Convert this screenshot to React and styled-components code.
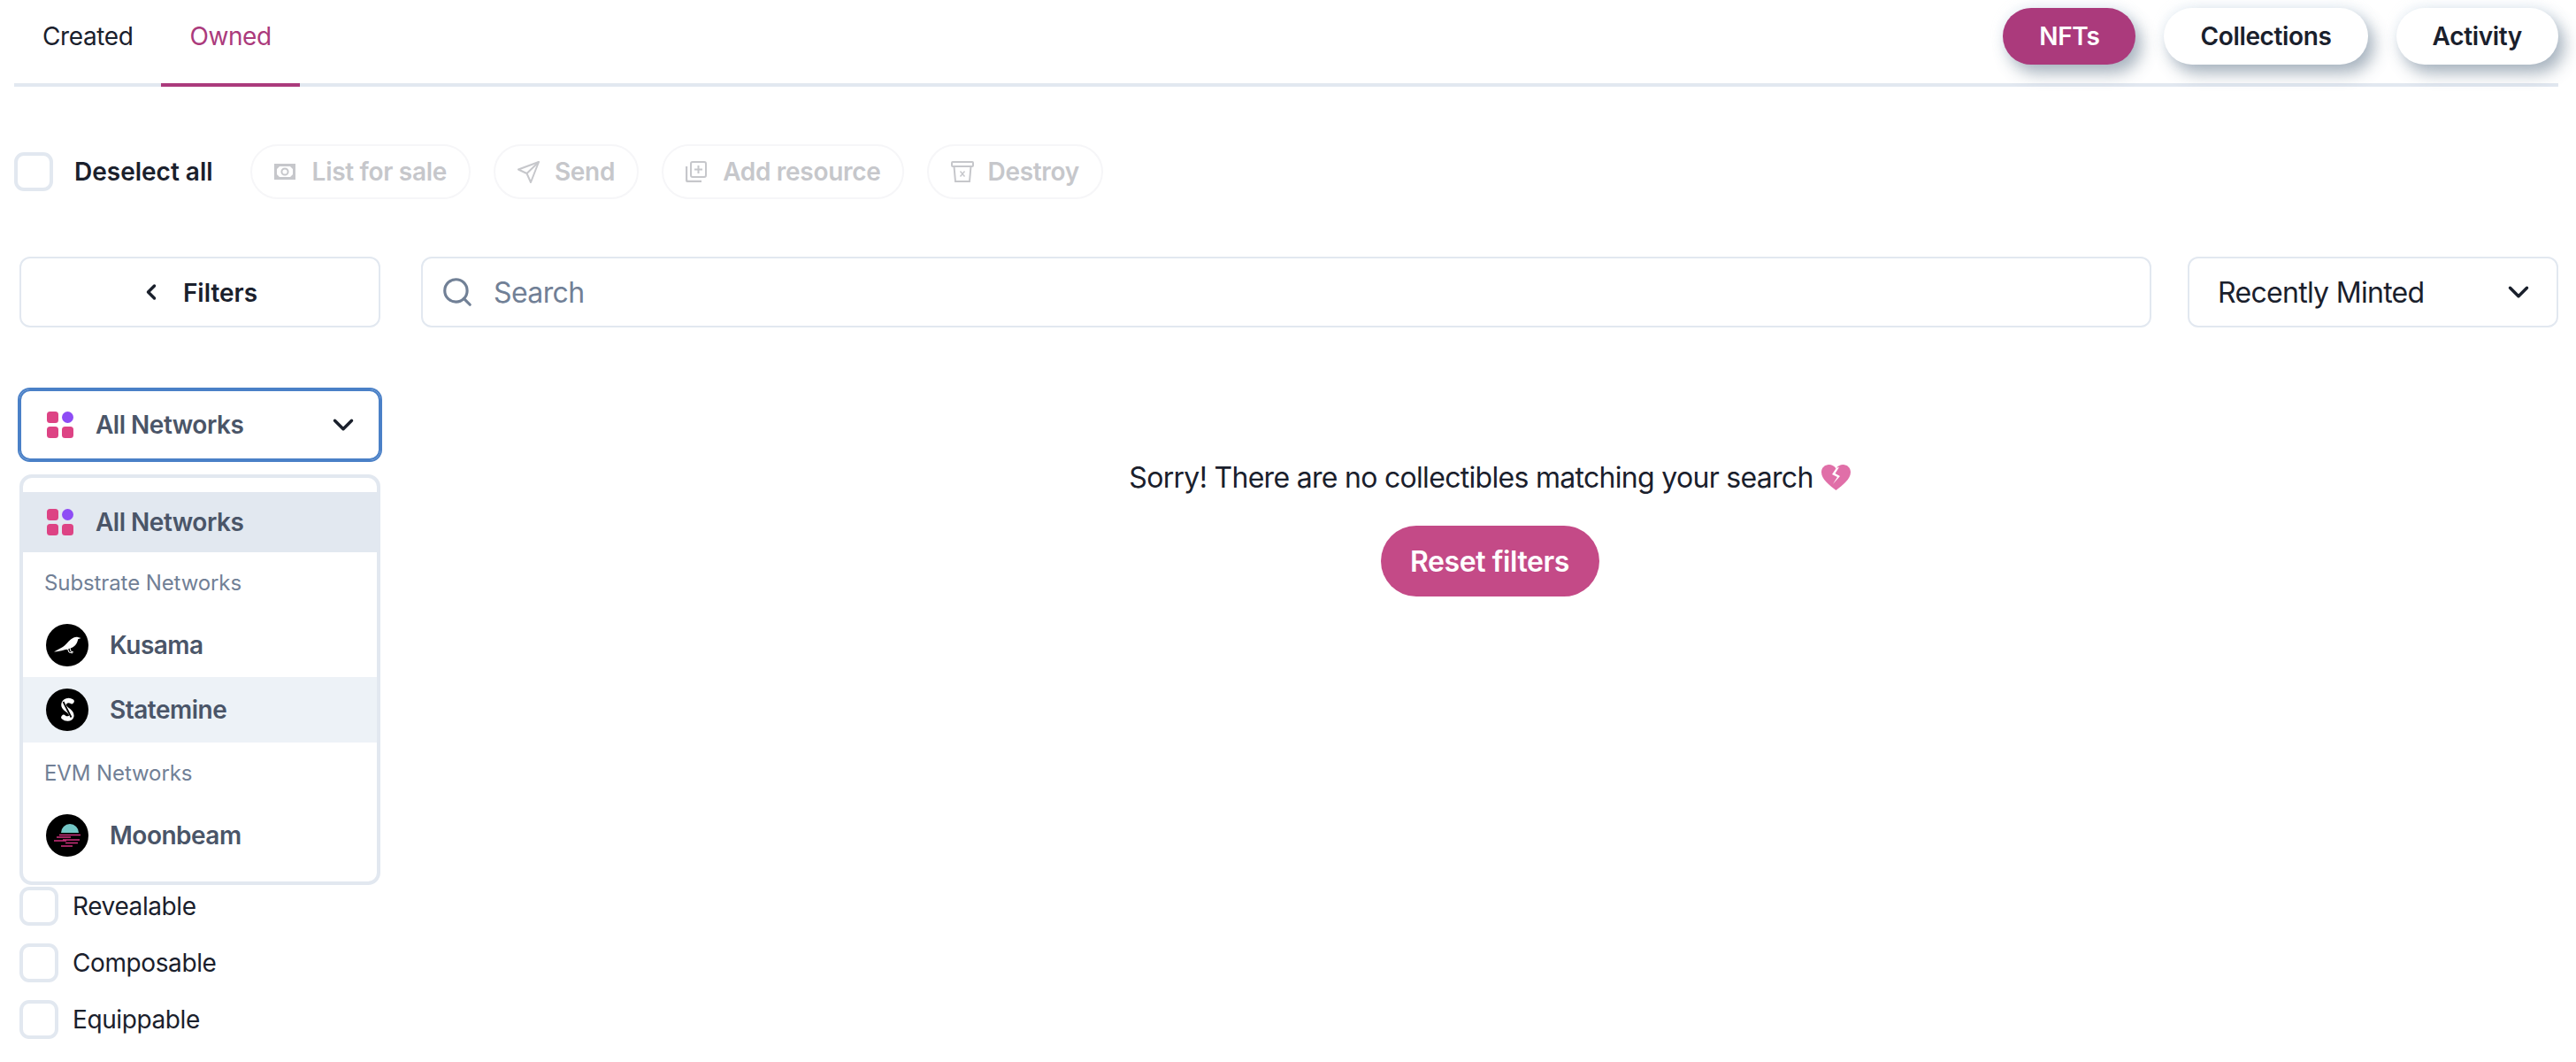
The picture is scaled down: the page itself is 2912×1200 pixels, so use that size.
import React from 'react';
import styled, { createGlobalStyle } from 'styled-components';
import { ChevronDown, ChevronLeft, Search } from 'lucide-react';

const GlobalStyle = createGlobalStyle`
  html, body {
    margin: 0;
    background: #fff;
    color: #1a202c;
    font-family: Inter, "Liberation Sans", sans-serif;
  }
  * { box-sizing: border-box; }
`;

const Page = styled.div`
  width: 2912px;
  height: 1200px;
  padding: 0 20px 0 16px;
  overflow: hidden;
`;

/* Top tabs */
const Header = styled.header`
  display: flex;
  justify-content: space-between;
  height: 98px;
  border-bottom: 4px solid #e2e8f0;
`;

const Tabs = styled.nav`
  display: flex;
`;

const Tab = styled.a`
  height: 98px;
  padding: 20px 32px 0;
  font-size: 28px;
  line-height: 42px;
  letter-spacing: -0.4px;
  color: ${p => (p.$active ? '#ab3a7c' : '#1a202c')};
  border-bottom: 4px solid ${p => (p.$active ? '#ab3a7c' : 'transparent')};
`;

const Pills = styled.div`
  display: flex;
  gap: 32px;
  padding-top: 9px;
`;

const Pill = styled.button`
  height: 64px;
  padding: 0 41px;
  border: 0;
  border-radius: 32px;
  font: 600 28px Inter, sans-serif;
  letter-spacing: -0.35px;
  color: ${p => (p.$active ? '#fff' : '#1a202c')};
  background: ${p => (p.$active ? '#ab3a7c' : '#fff')};
  box-shadow: 7px 10px 18px rgba(66, 90, 115, 0.45), 0 -3px 14px rgba(190, 215, 235, 0.25);
`;

/* Bulk actions */
const Actions = styled.div`
  display: flex;
  align-items: center;
  margin-top: 65px;
  height: 62px;
`;

const Box = styled.span`
  display: block;
  flex: none;
  width: 44px;
  height: 44px;
  border: 4px solid #e2e8f0;
  border-radius: 11px;
  background: #fff;
`;

const DeselectLabel = styled.span`
  margin: 0 42px 0 24px;
  font-size: 28px;
  font-weight: 600;
  color: #1a202c;
`;

const ActionGroup = styled.div`
  display: flex;
  gap: 26px;
`;

const ActionButton = styled.button`
  display: flex;
  align-items: center;
  gap: ${p => p.$gap}px;
  height: 62px;
  padding: 0 25px;
  border: 2px solid #f6f6f8;
  border-radius: 31px;
  background: #fff;
  font: 600 28px Inter, sans-serif;
  letter-spacing: -0.3px;
  color: #c6c7cb;
  svg { flex: none; display: block; }
`;

/* Filters, search, sort */
const Toolbar = styled.div`
  display: flex;
  margin: 65px 0 0 6px;
  height: 80px;
`;

const outlined = `
  height: 80px;
  border: 2px solid #e2e8f0;
  border-radius: 12px;
  background: #fff;
`;

const FilterButton = styled.button`
  ${outlined}
  flex: none;
  width: 408px;
  display: flex;
  align-items: center;
  justify-content: center;
  gap: 22px;
  padding-top: 2px;
  font: 600 28px Inter, sans-serif;
  color: #1a202c;
  svg { margin-left: -4px; margin-top: -2px; }
`;

const SearchBox = styled.div`
  ${outlined}
  flex: none;
  width: 1956px;
  margin-left: 46px;
  display: flex;
  align-items: center;
  gap: 22px;
  padding-left: 20px;
  font-size: 32px;
  letter-spacing: -0.6px;
  color: #718096;
`;

const SortSelect = styled.div`
  ${outlined}
  flex: none;
  width: 419px;
  margin-left: 41px;
  display: flex;
  align-items: center;
  justify-content: space-between;
  padding: 0 24px 0 32px;
  font-size: 32px;
  letter-spacing: -0.7px;
  color: #1a202c;
`;

/* Sidebar and results */
const Main = styled.div`
  display: flex;
  margin: 70px 0 0 6px;
`;

const Sidebar = styled.aside`
  flex: none;
  width: 408px;
`;

const NetworkField = styled.div`
  position: relative;
`;

const NetworkSelect = styled.div`
  height: 80px;
  border-radius: 12px;
  background: #fff;
  box-shadow: 0 0 0 2px #4a80c7, inset 0 0 0 2px #4a80c7;
  display: flex;
  align-items: center;
  justify-content: space-between;
  padding: 0 23px 0 31px;
`;

const NetworkName = styled.span`
  display: flex;
  align-items: center;
  gap: 25px;
  font-size: 28px;
  font-weight: 600;
  letter-spacing: -0.5px;
  color: #4a5568;
`;

const Menu = styled.div`
  position: absolute;
  top: 96px;
  left: 0;
  right: 0;
  padding: 16px 0;
  border: 4px solid #e2e8f0;
  border-radius: 14px;
  background: #fff;
`;

const AllItem = styled.div`
  display: flex;
  align-items: center;
  gap: 25px;
  height: 68px;
  padding-left: 27px;
  background: #e2e8f0;
  font-size: 28px;
  font-weight: 600;
  letter-spacing: -0.5px;
  color: #4a5568;
`;

const GroupTitle = styled.div`
  height: 68px;
  padding-left: 24px;
  font-size: 24px;
  line-height: 70px;
  letter-spacing: -0.1px;
  color: #718096;
`;

const MenuItem = styled.div`
  display: flex;
  align-items: center;
  gap: 24px;
  height: ${p => (p.$hover ? 74 : 73)}px;
  padding-left: 26px;
  background: ${p => (p.$hover ? '#edf2f7' : 'transparent')};
  font-size: 28px;
  font-weight: 600;
  letter-spacing: -0.5px;
  color: #4a5568;
`;

const TraitList = styled.div`
  margin-top: 482px;
  display: flex;
  flex-direction: column;
  gap: 20px;
`;

const Trait = styled.label`
  display: flex;
  align-items: center;
  gap: 16px;
  font-size: 28px;
  letter-spacing: -0.4px;
  color: #1a202c;
`;

const Results = styled.section`
  flex: 1;
  display: flex;
  flex-direction: column;
  align-items: center;
  margin-left: 46px;
  padding-top: 75px;
`;

const EmptyMessage = styled.p`
  display: flex;
  align-items: center;
  gap: 9px;
  margin: 0;
  height: 48px;
  font-size: 32px;
  letter-spacing: -0.7px;
  color: #1a202c;
`;

const ResetButton = styled.button`
  margin-top: 31px;
  width: 247px;
  height: 80px;
  border: 0;
  border-radius: 40px;
  background: #c44a87;
  color: #fff;
  font: 600 32px Inter, sans-serif;
  letter-spacing: -0.4px;
`;

/* Drawn icons */
const CashIcon = () => (
  <svg width="24" height="18" viewBox="0 0 24 18">
    <rect x="1.5" y="1.5" width="21" height="15" fill="#fff" stroke="#c6c7cb" strokeWidth="3" />
    <path d="M2 2h5L2 7zM22 2h-5l5 5zM2 16h5l-5-5zM22 16h-5l5-5z" fill="#c6c7cb" />
    <circle cx="12" cy="9" r="3.6" fill="none" stroke="#c6c7cb" strokeWidth="2" />
  </svg>
);

const SendIcon = () => (
  <svg width="25" height="25" viewBox="0 0 25 25" fill="none" stroke="#c6c7cb" strokeWidth="2" strokeLinejoin="round">
    <path d="M24 1 1 9.5l9.5 4.5L15 24z" />
    <path d="M24 1 10.5 14" />
  </svg>
);

const AddIcon = () => (
  <svg width="24" height="24" viewBox="0 0 24 24" fill="none" stroke="#c6c7cb" strokeWidth="2">
    <rect x="6" y="1" width="17" height="17" rx="2" />
    <path d="M1 6v15a2 2 0 0 0 2 2h15" strokeWidth="2.4" />
    <path d="M14.5 5v9M10 9.5h9" />
  </svg>
);

const BinIcon = () => (
  <svg width="26" height="24" viewBox="0 0 26 24" fill="none" stroke="#c6c7cb" strokeWidth="2">
    <rect x="1" y="1" width="24" height="5" rx="1" />
    <path d="M3.5 6 5 23h16l1.5-17" />
    <path d="m10.5 11.5 5 6M15.5 11.5l-5 6" strokeWidth="1.4" />
  </svg>
);

const AllNetworksIcon = () => (
  <svg width="30" height="30" viewBox="0 0 30 30">
    <rect width="13" height="13" rx="3.5" fill="#dd4384" />
    <circle cx="23.5" cy="6.5" r="6.5" fill="#8e4cf5" />
    <rect y="17" width="13" height="13" rx="3.5" fill="#dd4384" />
    <rect x="17" y="17" width="13" height="13" rx="3.5" fill="#dd4384" />
  </svg>
);

const KusamaIcon = () => (
  <svg width="48" height="48" viewBox="0 0 48 48">
    <circle cx="24" cy="24" r="24" fill="#000" />
    <path d="M9 31.5 19 26c3-2 6-6 9-8.5 2.5-2 6-3.5 8-2.5l3.5 1-3.3 1.3c-.7 4-3 8-7.2 9.7l-3.3.9-.5.8-3.2.4-4.5 1.1-5.5 1z" fill="#fff" />
    <path d="m24 27 2 5 4 1M27 27l1 4 3 1" fill="none" stroke="#fff" strokeWidth="1" />
  </svg>
);

const StatemineIcon = () => (
  <svg width="48" height="48" viewBox="0 0 48 48">
    <circle cx="24" cy="24" r="24" fill="#000" />
    <path d="M29 14.5c-3-2-8.5-1-9 3.5-.5 4 4 5.5 6 7.5 2 1.8 3.5 4 2.5 6.5-1.3 2.5-6 2.7-8.5.5" fill="none" stroke="#fff" strokeWidth="5.5" strokeLinecap="round" />
    <path d="m19.5 15 9 17.5" stroke="#000" strokeWidth="1.8" />
  </svg>
);

const moonbeamLines = [
  [15, 39, 23.5], [12, 28, 26], [19, 38, 29], [9, 23, 30], [22, 36, 32.5], [17, 30, 36],
];

const MoonbeamIcon = () => (
  <svg width="48" height="48" viewBox="0 0 48 48">
    <circle cx="24" cy="24" r="24" fill="#000" />
    <path d="M17 21a10 10 0 0 1 20 0z" fill="#74c7c6" />
    {moonbeamLines.map(([from, to, y]) => (
      <path key={y} d={`M${from} ${y}H${to}`} stroke="#d0307f" strokeWidth="1.5" />
    ))}
  </svg>
);

const BrokenHeart = () => (
  <svg width="33" height="29" viewBox="0 0 33 29">
    <path d="M16.5 29C9 23 0 16.5 0 8.5 0 3.5 4 0 8.5 0c3.3 0 6.3 1.5 8 4.5C18.2 1.5 21.2 0 24.5 0 29 0 33 3.5 33 8.5 33 16.5 24 23 16.5 29z" fill="#e06fa8" />
    <path d="M17 3.5 12 11l6 3-5 8 8-9-5.5-3L20 3z" fill="#fff" />
  </svg>
);

const App = () => (
  <Page>
    <GlobalStyle />
    <Header>
      <Tabs>
        <Tab>Created</Tab>
        <Tab $active>Owned</Tab>
      </Tabs>
      <Pills>
        <Pill $active>NFTs</Pill>
        <Pill>Collections</Pill>
        <Pill>Activity</Pill>
      </Pills>
    </Header>

    <Actions>
      <Box />
      <DeselectLabel>Deselect all</DeselectLabel>
      <ActionGroup>
        <ActionButton $gap={19}><CashIcon />List for sale</ActionButton>
        <ActionButton $gap={17}><SendIcon />Send</ActionButton>
        <ActionButton $gap={18}><AddIcon />Add resource</ActionButton>
        <ActionButton $gap={15}><BinIcon />Destroy</ActionButton>
      </ActionGroup>
    </Actions>

    <Toolbar>
      <FilterButton><ChevronLeft size={28} strokeWidth={3} />Filters</FilterButton>
      <SearchBox>
        <Search size={38} strokeWidth={2} color="#718096" />
        Search
      </SearchBox>
      <SortSelect>
        Recently Minted
        <ChevronDown size={38} strokeWidth={2.2} color="#1a202c" />
      </SortSelect>
    </Toolbar>

    <Main>
      <Sidebar>
        <NetworkField>
          <NetworkSelect>
            <NetworkName><AllNetworksIcon />All Networks</NetworkName>
            <ChevronDown size={38} strokeWidth={2.2} color="#1a202c" />
          </NetworkSelect>
          <Menu>
            <AllItem><AllNetworksIcon />All Networks</AllItem>
            <GroupTitle>Substrate Networks</GroupTitle>
            <MenuItem><KusamaIcon />Kusama</MenuItem>
            <MenuItem $hover><StatemineIcon />Statemine</MenuItem>
            <GroupTitle>EVM Networks</GroupTitle>
            <MenuItem><MoonbeamIcon />Moonbeam</MenuItem>
          </Menu>
        </NetworkField>
        <TraitList>
          <Trait><Box />Revealable</Trait>
          <Trait><Box />Composable</Trait>
          <Trait><Box />Equippable</Trait>
        </TraitList>
      </Sidebar>
      <Results>
        <EmptyMessage>
          Sorry! There are no collectibles matching your search
          <BrokenHeart />
        </EmptyMessage>
        <ResetButton>Reset filters</ResetButton>
      </Results>
    </Main>
  </Page>
);

export default App;
